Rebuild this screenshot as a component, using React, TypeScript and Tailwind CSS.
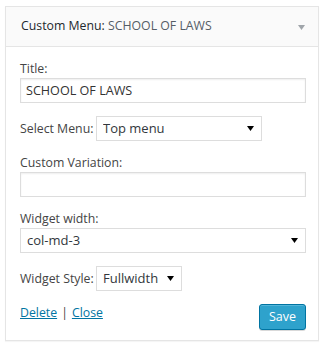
import React from "react";

const font = { fontFamily: '"Open Sans", "Liberation Sans", sans-serif' };

function Caret({ className }: { className?: string }) {
  return (
    <svg width="7" height="5" viewBox="0 0 7 5" className={className}>
      <path d="M0 0h7L3.5 5z" fill="currentColor" />
    </svg>
  );
}

function Select({ value, width }: { value: string; width: string }) {
  return (
    <div className={`relative ${width}`}>
      <select
        defaultValue={value}
        className="h-[25px] w-full appearance-none border border-[#ddd] bg-white pl-[6px] pr-5 text-[13px] leading-[23px] text-[#32373c] outline-none"
        style={font}
      >
        <option>{value}</option>
      </select>
      <Caret className="pointer-events-none absolute right-[8px] top-[10px] text-black" />
    </div>
  );
}

function TextField({ value }: { value?: string }) {
  return (
    <input
      type="text"
      defaultValue={value}
      className="block h-[25px] w-full border border-[#ddd] bg-white px-[5px] text-[12.6px] text-[#333] shadow-[inset_0_1px_2px_rgba(0,0,0,0.07)] outline-none"
      style={font}
    />
  );
}

export default function App() {
  return (
    <div className="min-h-[345px] w-[325px] bg-white pl-[5px] pt-[6px]" style={font}>
      <div className="w-[314px] border border-[#e5e5e5] bg-white text-[12.3px] text-[#444] shadow-[0_1px_1px_rgba(0,0,0,0.04)]">
        {/* widget header */}
        <div className="flex h-[40px] items-center justify-between border-b border-[#e5e5e5] bg-[#fafafa] pl-[15px] pr-[13px]">
          <h4 className="whitespace-nowrap text-[12.3px] font-normal text-[#23282d]">
            Custom Menu: <span className="text-[#555d66]">SCHOOL OF LAWS</span>
          </h4>
          <Caret className="mt-[1px] text-[#a0a5aa]" />
        </div>

        {/* widget body */}
        <div className="pb-[10px] pl-[14px] pr-[12px] pt-[13px]">
          <label className="block leading-[18px]">Title:</label>
          <TextField value="SCHOOL OF LAWS" />

          <div className="mt-[13px] flex items-center gap-[4px]">
            <label className="w-[72px] whitespace-nowrap leading-[18px]">Select Menu:</label>
            <Select value="Top menu" width="w-[166px]" />
          </div>

          <label className="mt-[13px] block leading-[18px]">Custom Variation:</label>
          <TextField />

          <label className="mt-[13px] block leading-[18px]">Widget width:</label>
          <Select value="col-md-3" width="w-full" />

          <div className="mt-[13px] flex items-center gap-[4px]">
            <label className="w-[72px] whitespace-nowrap leading-[18px]">Widget Style:</label>
            <Select value="Fullwidth" width="w-[86px]" />
          </div>

          <div className="mt-[13px] flex items-start justify-between">
            <div className="leading-[18px]">
              <a href="#" className="text-[#0074a2] underline">Delete</a>
              <span className="mx-[4px]">|</span>
              <a href="#" className="text-[#0074a2] underline">Close</a>
            </div>
            <button
              type="button"
              className="h-[26px] rounded-[3px] border border-[#0074a2] bg-[#2ea2cc] px-[9px] text-[12.5px] leading-[24px] text-white shadow-[inset_0_1px_0_rgba(120,200,230,0.5),0_1px_0_rgba(0,0,0,0.15)]"
              style={font}
            >
              Save
            </button>
          </div>
        </div>
      </div>
    </div>
  );
}
